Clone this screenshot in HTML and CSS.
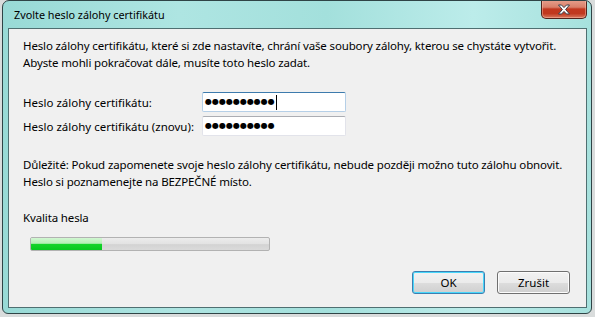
FILE: index.html
```html
<!DOCTYPE html>
<html lang="cs">
<head>
    <meta charset="UTF-8">
    <title>Zvolte heslo zálohy certifikátu</title>
    <link rel="stylesheet" href="styles.css">
</head>
<body>
    <div class="window">
        <div class="titlebar">
            <span class="title">Zvolte heslo zálohy certifikátu</span>
            <button class="close" title="Zavřít">
                <svg width="14" height="11" viewBox="0 0 14 11">
                    <path d="M1.5 1 L4.5 1 L7 3.6 L9.5 1 L12.5 1 L8.6 5.5 L12.5 10 L9.5 10 L7 7.4 L4.5 10 L1.5 10 L5.4 5.5 Z" fill="#fff" stroke="#3a3f4a" stroke-width="1" stroke-linejoin="round"/>
                </svg>
            </button>
        </div>
        <div class="client">
            <p class="text">Heslo zálohy certifikátu, které si zde nastavíte, chrání vaše soubory zálohy, kterou se chystáte vytvořit.<br>Abyste mohli pokračovat dále, musíte toto heslo zadat.</p>

            <div class="fields">
                <div class="row">
                    <span class="label">Heslo zálohy certifikátu:</span>
                    <div class="box focus"><span class="dots">●●●●●●●●●●</span><i class="caret"></i></div>
                </div>
                <div class="row">
                    <span class="label">Heslo zálohy certifikátu (znovu):</span>
                    <div class="box"><span class="dots">●●●●●●●●●●</span></div>
                </div>
            </div>

            <p class="text warn">Důležité: Pokud zapomenete svoje heslo zálohy certifikátu, nebude později možno tuto zálohu obnovit.<br>Heslo si poznamenejte na BEZPEČNÉ místo.</p>

            <p class="text quality">Kvalita hesla</p>
            <div class="meter"><div class="fill" style="width: 30%"></div></div>

            <div class="actions">
                <button class="btn default">OK</button>
                <button class="btn">Zrušit</button>
            </div>
        </div>
    </div>
</body>
</html>
```

FILE: styles.css
```css
* {
    margin: 0;
    padding: 0;
    box-sizing: border-box;
}

body {
    background: #d9dcdc;
    font-family: "Noto Sans", "Open Sans", sans-serif;
    font-size: 11.5px;
    color: #000;
}

.window {
    width: 590px;
    height: 314px;
    margin-left: 2px;
    border: 1px solid #2f4446;
    border-radius: 7px 7px 6px 6px;
    background: linear-gradient(90deg, #98dad6 0%, #aee5e2 30%, #a3e0dc 55%, #bcecea 80%, #a6e1dd 100%);
    padding: 0 4px 5px 5px;
    display: flex;
    flex-direction: column;
    overflow: hidden;
}

.titlebar {
    height: 27px;
    flex: none;
    display: flex;
    justify-content: space-between;
    align-items: flex-start;
    margin: 0 -4px 0 -5px;
    padding: 0 4px 0 11px;
}

.title {
    margin-top: 6px;
    font-size: 10.8px;
    line-height: 16px;
}

.close {
    width: 46px;
    height: 19px;
    margin-top: -1px;
    border: 1px solid #52231c;
    border-top: none;
    border-radius: 0 0 5px 5px;
    background: linear-gradient(#e7a08d 0%, #d97f69 40%, #c2381f 50%, #c0391f 75%, #d9795f 100%);
    box-shadow: inset 0 0 0 1px rgba(255, 200, 180, 0.45);
    display: flex;
    align-items: center;
    justify-content: center;
    cursor: pointer;
}

.close svg {
    display: block;
    margin-top: 1px;
}

.client {
    flex: 1;
    border: 1px solid #4f6f71;
    background: #f0f0f0;
    padding: 8px 16px 0 14px;
    display: flex;
    flex-direction: column;
}

.text {
    line-height: 17px;
    letter-spacing: -0.14px;
    white-space: nowrap;
}

.fields {
    margin-top: 21px;
    display: flex;
    flex-direction: column;
    gap: 4px;
}

.row {
    display: flex;
    align-items: center;
}

.label {
    width: 179px;
    white-space: nowrap;
}

.box {
    width: 144px;
    height: 20px;
    background: #fff;
    border: 1px solid #e2e3ea;
    border-top-color: #abadb3;
    border-radius: 2px;
    display: flex;
    align-items: center;
    padding-left: 2px;
}

.box.focus {
    border-color: #b5cfe7;
    border-top-color: #3d7bad;
}

.dots {
    font-family: "DejaVu Sans", sans-serif;
    font-size: 8px;
    line-height: 10px;
}

.caret {
    width: 1px;
    height: 15px;
    margin-left: 1px;
    background: #000;
}

.warn {
    margin-top: 20px;
}

.quality {
    margin-top: 19px;
}

.meter {
    width: 240px;
    height: 14px;
    flex: none;
    margin: 11px 0 0 7px;
    border: 1px solid #b2b2b2;
    border-radius: 2px;
    background: linear-gradient(#ececec 0%, #e2e2e2 50%, #d3d3d3 55%, #dadada 100%);
    overflow: hidden;
}

.fill {
    height: 100%;
    background: linear-gradient(#d2f7d2 0%, #b3efb5 45%, #14d42a 50%, #06c91f 100%);
}

.actions {
    margin-top: 20px;
    display: flex;
    justify-content: flex-end;
    gap: 12px;
}

.btn {
    width: 73px;
    height: 23px;
    border: 1px solid #707070;
    border-radius: 3px;
    background: linear-gradient(#f2f2f2 0%, #ebebeb 50%, #dddddd 51%, #cfcfcf 100%);
    box-shadow: inset 0 0 0 1px #fcfcfc;
    font-family: inherit;
    font-size: 11.5px;
    color: #000;
    cursor: pointer;
}

.btn.default {
    border-color: #3c7fb1;
    box-shadow: inset 0 0 0 1px #48d7fb;
}
```
